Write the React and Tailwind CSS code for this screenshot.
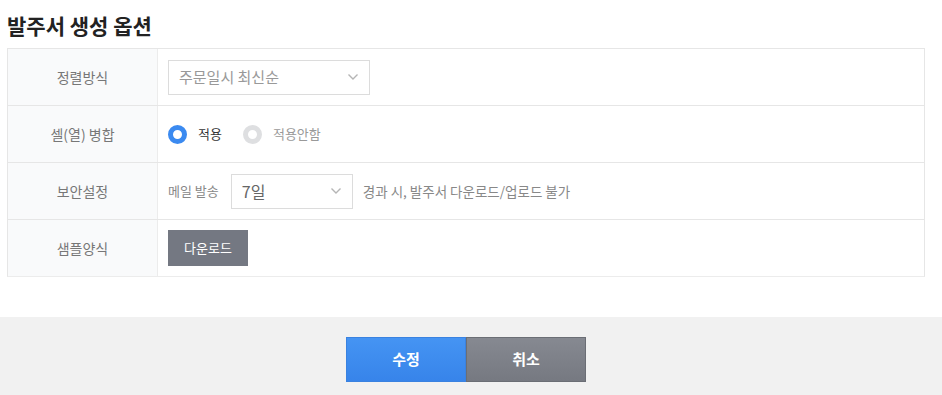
import React, { useState } from 'react';

const font = { fontFamily: '"Noto Sans CJK KR", "Noto Sans", sans-serif' };

function Chevron() {
	return (
		<svg width="12" height="8" viewBox="0 0 12 8" className="shrink-0">
			<path d="M1.5 1.5 L6 6 L10.5 1.5" fill="none" stroke="#b5b5b5" strokeWidth="1.4" />
		</svg>
	);
}

function Radio({ checked, label, onClick }) {
	return (
		<button type="button" onClick={onClick} className="flex items-center gap-[11px]">
			<span
				className={`w-[19px] h-[19px] rounded-full border-[5px] bg-white ${checked ? 'border-[#3b8af0]' : 'border-[#dedfe1]'}`}
			></span>
			<span className={`text-[13px] ${checked ? 'text-[#333]' : 'text-[#999]'}`}>{label}</span>
		</button>
	);
}

function Row({ label, children, last }) {
	return (
		<div className={`flex ${last ? 'h-[56px]' : 'h-[57px] border-b border-[#e6e6e6]'}`}>
			<div className="w-[150px] shrink-0 bg-[#f9fafb] border-r border-[#ececec] flex items-center justify-center text-[14px] text-[#777]">
				{label}
			</div>
			<div className="flex-1 flex items-center px-[10px]">{children}</div>
		</div>
	);
}

export default function App() {
	const [merge, setMerge] = useState(true);

	return (
		<div className="w-[942px] h-[395px] bg-white flex flex-col" style={font}>
			<div className="px-[7px] pt-[10px]">
				<h1 className="text-[21px] font-bold text-[#222] leading-[30px] h-[38px]">발주서 생성 옵션</h1>

				{/* Options table */}
				<div className="w-[918px] border border-[#e6e6e6] border-b-[#ececec]">
					<Row label="정렬방식">
						<div className="w-[202px] h-[35px] border border-[#dcdcdc] flex items-center justify-between pl-[10px] pr-[10px]">
							<span className="text-[15px] text-[#999]">주문일시 최신순</span>
							<Chevron />
						</div>
					</Row>
					<Row label="셀(열) 병합">
						<div className="flex items-center gap-[21px]">
							<Radio checked={merge} label="적용" onClick={() => setMerge(true)} />
							<Radio checked={!merge} label="적용안함" onClick={() => setMerge(false)} />
						</div>
					</Row>
					<Row label="보안설정">
						<div className="flex items-center text-[13px] text-[#888]">
							<span>메일 발송</span>
							<div className="ml-[12px] w-[122px] h-[35px] border border-[#dcdcdc] flex items-center justify-between pl-[10px] pr-[10px]">
								<span className="text-[16px] text-[#666]">7일</span>
								<Chevron />
							</div>
							<span className="ml-[10px] text-[13.5px]">경과 시, 발주서 다운로드/업로드 불가</span>
						</div>
					</Row>
					<Row label="샘플양식" last>
						<button type="button" className="h-[36px] w-[80px] bg-[#747882] text-white text-[13px]">
							다운로드
						</button>
					</Row>
				</div>
			</div>

			{/* Footer actions */}
			<div className="mt-auto h-[78px] bg-[#f1f1f1] flex justify-center pt-[20px] pr-[10px]">
				<div className="flex h-[45px]">
					<button
						type="button"
						className="w-[120px] h-full text-white text-[15px] font-bold border border-[#3a82e0] bg-gradient-to-b from-[#4594f3] to-[#3784ea]"
					>
						수정
					</button>
					<button
						type="button"
						className="w-[120px] h-full text-white text-[15px] font-bold border border-[#6b6e75] bg-gradient-to-b from-[#868991] to-[#767981]"
					>
						취소
					</button>
				</div>
			</div>
		</div>
	);
}
